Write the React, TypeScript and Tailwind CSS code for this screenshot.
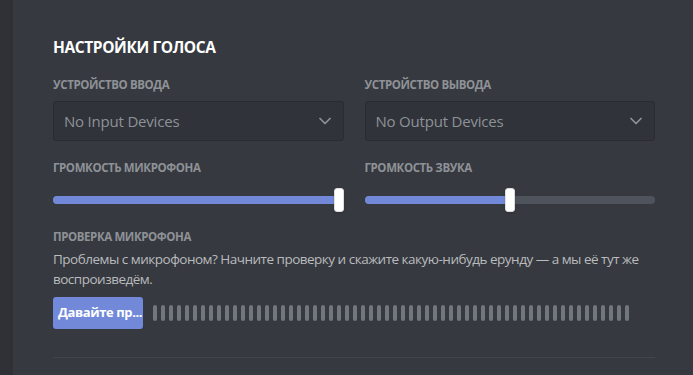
import React from "react";

const font = { fontFamily: '"Open Sans", "Noto Sans", sans-serif' };

const Label = ({ children }: { children: React.ReactNode }) => (
  <h5 className="text-[11.5px] leading-[16px] font-bold uppercase tracking-[-0.4px] text-[#8e9297]">
    {children}
  </h5>
);

const Chevron = () => (
  <svg width="14" height="8" viewBox="0 0 14 8" className="text-[#8e9297]">
    <path
      d="M2 1.5l5 5 5-5"
      fill="none"
      stroke="currentColor"
      strokeWidth="1.75"
      strokeLinecap="round"
      strokeLinejoin="round"
    />
  </svg>
);

const Select = ({ value }: { value: string }) => (
  <div className="flex h-[40px] items-center justify-between rounded-[3px] border border-[#2a2c31] bg-[#303339] pl-[10px] pr-[11px]">
    <span className="text-[15px] tracking-[-0.2px] text-[#8e9297]">{value}</span>
    <Chevron />
  </div>
);

const Slider = ({ value, thumbLeft }: { value: number; thumbLeft: string }) => (
  <div className="relative h-[24px]">
    <div className="absolute top-[8px] left-0 right-0 h-[8px] rounded-full bg-[#4f545c]">
      <div
        className="h-full rounded-full bg-[#7289da]"
        style={{ width: `${value}%` }}
      />
    </div>
    <div
      className="absolute top-0 h-[24px] w-[10px] rounded-[3px] border border-[#dcddde] bg-white shadow"
      style={{ left: thumbLeft }}
    />
  </div>
);

const bars = Array.from({ length: 60 }, (_, i) => i);

export default function App() {
  return (
    <div className="flex h-[375px] w-[693px] overflow-hidden" style={font}>
      <div className="w-[13px] shrink-0 bg-[#2f3136]" />
      <div className="flex-1 bg-[#36393f] pl-[40px] pt-[37px]">
        <div className="w-[602px]">
          <h2 className="text-[15.5px] leading-[20px] font-bold uppercase tracking-[-0.4px] text-white">
            Настройки голоса
          </h2>

          <div className="mt-[20px] grid grid-cols-2 gap-x-[21px]">
            <div>
              <Label>Устройство ввода</Label>
              <div className="mt-[8px]">
                <Select value="No Input Devices" />
              </div>
            </div>
            <div>
              <Label>Устройство вывода</Label>
              <div className="mt-[8px]">
                <Select value="No Output Devices" />
              </div>
            </div>

            <div className="mt-[19px]">
              <Label>Громкость микрофона</Label>
              <div className="mt-[12px]">
                <Slider value={100} thumbLeft="calc(100% - 10px)" />
              </div>
            </div>
            <div className="mt-[19px]">
              <Label>Громкость звука</Label>
              <div className="mt-[12px]">
                <Slider value={50} thumbLeft="calc(50% - 5px)" />
              </div>
            </div>
          </div>

          <div className="mt-[17px]">
            <Label>Проверка микрофона</Label>
            <p className="mt-[4px] text-[13.5px] leading-[20px] tracking-[-0.5px] text-[#b9bbbe]">
              Проблемы с микрофоном? Начните проверку и скажите какую-нибудь ерунду — а мы её тут же
              воспроизведём.
            </p>
            <div className="mt-[8px] flex items-center gap-[10px]">
              <button className="h-[32px] w-[90px] shrink-0 overflow-hidden whitespace-nowrap rounded-[3px] bg-[#7289da] px-[5px] text-center text-[13px] font-bold tracking-[-0.4px] text-white">
                Давайте пр...
              </button>
              <div className="flex gap-[4px]">
                {bars.map((b) => (
                  <div key={b} className="h-[16px] w-[4px] rounded-full bg-[#72767d]" />
                ))}
              </div>
            </div>
          </div>

          <div className="mt-[28px] h-px bg-[#42454a]" />
        </div>
      </div>
    </div>
  );
}
